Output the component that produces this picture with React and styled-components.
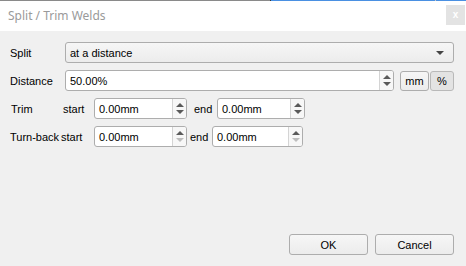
import styled, { createGlobalStyle } from "styled-components";

const GlobalStyle = createGlobalStyle`
  html, body {
    margin: 0;
    padding: 0;
    background: #f0f0f0;
  }
  body {
    font-family: "Liberation Sans", Arial, sans-serif;
    font-size: 11px;
    color: #000;
  }
`;

const Window = styled.div`
  width: 466px;
  height: 266px;
  display: flex;
  flex-direction: column;
  overflow: hidden;
`;

const EdgeLine = styled.div`
  display: flex;
  height: 1px;
  flex-shrink: 0;
`;

const EdgeSeg = styled.div`
  width: ${(p) => p.$w}px;
  flex: ${(p) => (p.$w ? "none" : 1)};
  background: ${(p) => p.$color};
`;

const TitleBar = styled.div`
  height: 30px;
  background: #fff;
  display: flex;
  align-items: center;
  justify-content: space-between;
  padding: 0 1px 0 8px;
  flex-shrink: 0;
`;

const Title = styled.span`
  font-family: "Noto Sans", "Open Sans", sans-serif;
  font-size: 12px;
  color: #9a9a9a;
  margin-top: -1px;
`;

const CloseBtn = styled.div`
  width: 19px;
  height: 20px;
  margin-top: -3px;
  background: #e3e3e3;
  color: #fff;
  font-size: 10px;
  font-weight: bold;
  display: flex;
  align-items: center;
  justify-content: center;
`;

const Body = styled.div`
  flex: 1;
  display: flex;
  flex-direction: column;
  padding: 11px 12px 11px 10px;
`;

const Form = styled.div`
  display: flex;
  flex-direction: column;
  gap: 7px;
`;

const Row = styled.div`
  display: flex;
  align-items: center;
  height: 21px;
`;

const Label = styled.span`
  width: ${(p) => p.$w}px;
  flex-shrink: 0;
  box-sizing: border-box;
  padding-left: ${(p) => p.$pl || 0}px;
  white-space: nowrap;
`;

const Combo = styled.div`
  flex: 1;
  height: 21px;
  box-sizing: border-box;
  border: 1px solid #adadad;
  border-radius: 3px;
  background: linear-gradient(#f6f6f6, #ececec);
  display: flex;
  align-items: center;
  justify-content: space-between;
  padding: 0 9px 0 4px;
`;

const Caret = styled.span`
  width: 0;
  height: 0;
  border-left: 4px solid transparent;
  border-right: 4px solid transparent;
  border-top: 4px solid #444;
`;

const Spin = styled.div`
  width: ${(p) => (p.$w ? `${p.$w}px` : "auto")};
  flex: ${(p) => (p.$w ? "none" : 1)};
  height: 21px;
  box-sizing: border-box;
  border: 1px solid #adadad;
  border-radius: 3px;
  background: #fff;
  display: flex;
  align-items: stretch;
`;

const SpinText = styled.span`
  flex: 1;
  display: flex;
  align-items: center;
  padding-left: 4px;
`;

const Arrows = styled.div`
  width: 13px;
  border-left: 1px solid #d4d4d4;
  background: #f7f7f7;
  border-radius: 0 2px 2px 0;
  display: flex;
  flex-direction: column;
  align-items: center;
  justify-content: center;
  gap: 3px;
`;

const Tri = styled.span`
  width: 0;
  height: 0;
  border-left: 4px solid transparent;
  border-right: 4px solid transparent;
  ${(p) => (p.$down ? "border-top" : "border-bottom")}: 4px solid
    ${(p) => (p.$off ? "#bdbdbd" : "#5a5a5a")};
`;

const UnitGroup = styled.div`
  display: flex;
  gap: 1px;
  margin-left: 6px;
`;

const UnitBtn = styled.div`
  width: ${(p) => p.$w}px;
  height: 20px;
  box-sizing: border-box;
  border: 1px solid ${(p) => (p.$on ? "#b9b9b9" : "#adadad")};
  border-radius: 3px;
  background: ${(p) => (p.$on ? "#e3e3e3" : "linear-gradient(#f6f6f6, #ececec)")};
  display: flex;
  align-items: center;
  justify-content: center;
`;

const Word = styled.span`
  width: ${(p) => p.$w}px;
  flex-shrink: 0;
  box-sizing: border-box;
  padding-left: ${(p) => p.$pl || 0}px;
  white-space: nowrap;
`;

const Footer = styled.div`
  margin-top: auto;
  display: flex;
  justify-content: flex-end;
  gap: 7px;
`;

const Button = styled.div`
  width: 79px;
  height: 21px;
  box-sizing: border-box;
  border: 1px solid #adadad;
  border-radius: 3px;
  background: linear-gradient(#f6f6f6, #ececec);
  display: flex;
  align-items: center;
  justify-content: center;
`;

const SpinBox = ({ value, w, downOff }) => (
  <Spin $w={w}>
    <SpinText>{value}</SpinText>
    <Arrows>
      <Tri />
      <Tri $down $off={downOff} />
    </Arrows>
  </Spin>
);

export default function App() {
  return (
    <>
      <GlobalStyle />
      <Window>
        <EdgeLine>
          <EdgeSeg $w={270} $color="#8a8a8a" />
          <EdgeSeg $w={1} $color="#333" />
          <EdgeSeg $w={164} $color="#4a90e2" />
          <EdgeSeg $w={1} $color="#c8c8c8" />
          <EdgeSeg $color="#4a90e2" />
        </EdgeLine>
        <TitleBar>
          <Title>Split / Trim Welds</Title>
          <CloseBtn>x</CloseBtn>
        </TitleBar>
        <Body>
          <Form>
            <Row>
              <Label $w={55}>Split</Label>
              <Combo>
                <span>at a distance</span>
                <Caret />
              </Combo>
            </Row>
            <Row>
              <Label $w={55}>Distance</Label>
              <SpinBox value="50.00%" />
              <UnitGroup>
                <UnitBtn $w={29}>mm</UnitBtn>
                <UnitBtn $w={24} $on>
                  %
                </UnitBtn>
              </UnitGroup>
            </Row>
            <Row>
              <Label $w={53} $pl={1}>Trim</Label>
              <Word $w={31}>start</Word>
              <SpinBox value="0.00mm" w={93} />
              <Word $w={30} $pl={7}>end</Word>
              <SpinBox value="0.00mm" w={88} />
            </Row>
            <Row>
              <Label $w={51}>Turn-back</Label>
              <Word $w={33}>start</Word>
              <SpinBox value="0.00mm" w={93} downOff />
              <Word $w={25} $pl={3}>end</Word>
              <SpinBox value="0.00mm" w={91} downOff />
            </Row>
          </Form>
          <Footer>
            <Button>OK</Button>
            <Button>Cancel</Button>
          </Footer>
        </Body>
      </Window>
    </>
  );
}
